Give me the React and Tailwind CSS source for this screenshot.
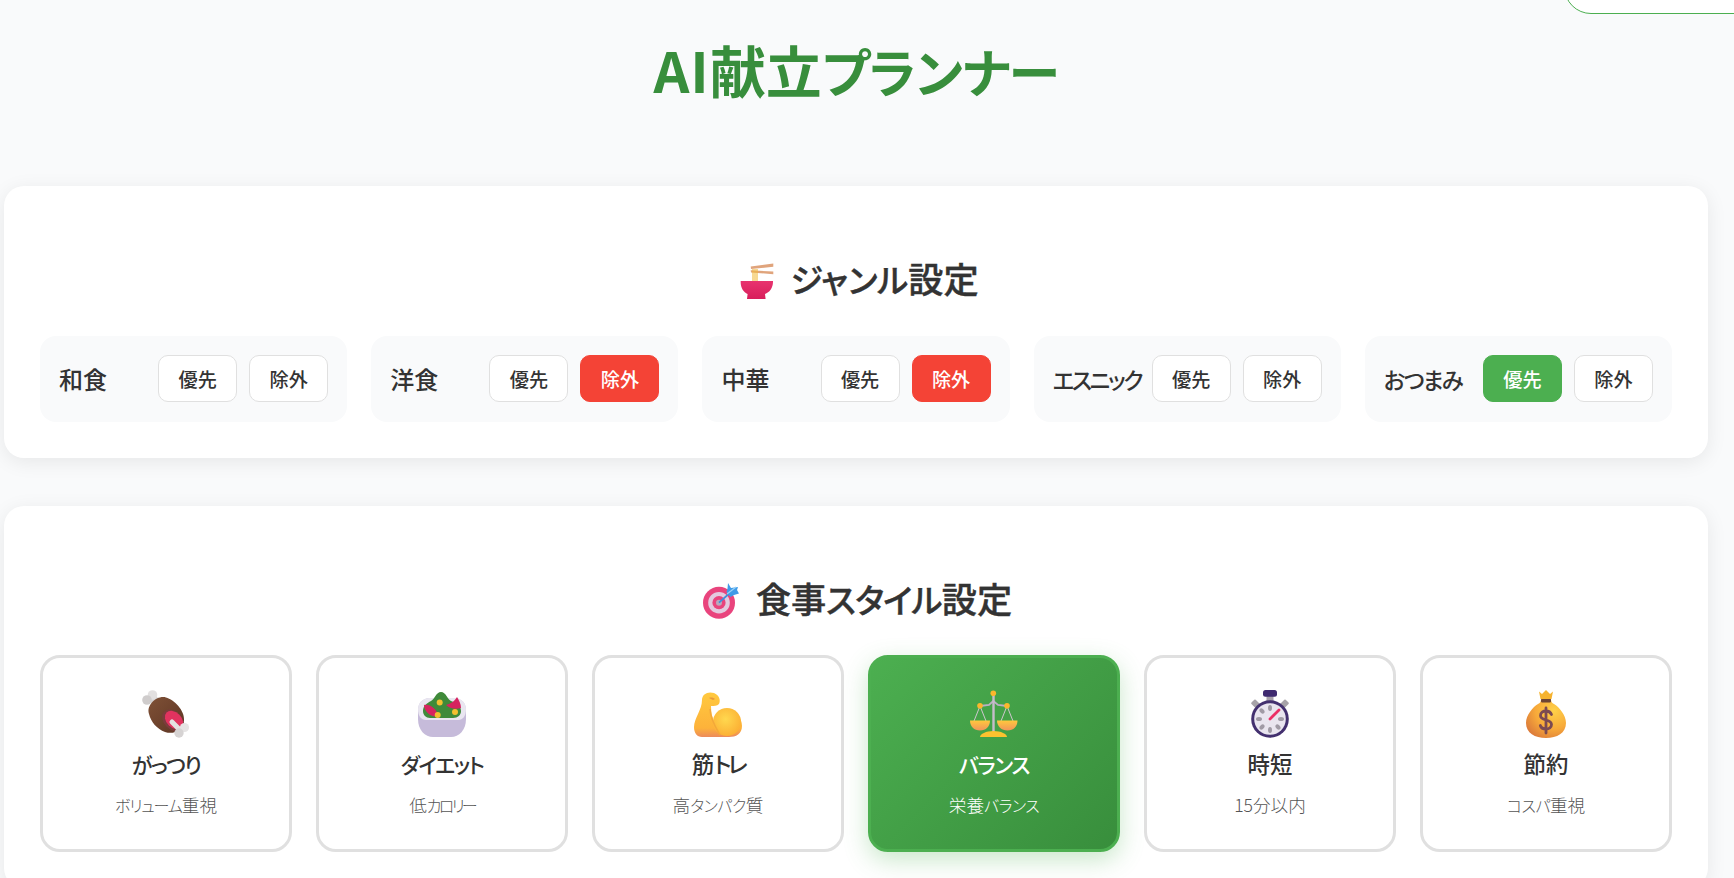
import React from "react";

const Bowl = () => (
  <svg viewBox="0 0 36 36" className="w-9 h-9 shrink-0">
    <defs>
      <linearGradient id="bowlG" x1="0" y1="0" x2="0" y2="1">
        <stop offset="0" stopColor="#e8336f" />
        <stop offset="1" stopColor="#d81e5b" />
      </linearGradient>
    </defs>
    <path d="M11.7 3.6 34.3.6v3.2L12 6Z" fill="#e0a47c" />
    <path d="M11.7 7.2 34.3 8.6v2.6L12 9.4Z" fill="#e0a47c" />
    <path d="M14 6v12M16 6v12M18 6v12" stroke="#f0b93a" strokeWidth="1.1" fill="none" />
    <path d="M1.7 18H34c.3 6.500-3.500 11.500-8 13l.6 5H8l.6-5C4.500 29.500 1.300 24.500 1.700 18Z" fill="url(#bowlG)" />
  </svg>
);

const Target = () => (
  <svg viewBox="0 0 36 36" className="w-9 h-9 shrink-0">
    <circle cx="16" cy="19.700" r="16" fill="#e9447d" />
    <circle cx="16" cy="19.700" r="10.800" fill="#e3cbdf" />
    <circle cx="16" cy="19.700" r="6.600" fill="#e9447d" />
    <circle cx="16" cy="19.700" r="3" fill="#b9a9bd" />
    <path d="M16 19.700 29 8" stroke="#3f8fdc" strokeWidth="1.800" />
    <path d="M25 0l3 5 7-1-1 3 2 3.500-5 1.500-3.500 2-4-5 1-3.500z" fill="#3f9be8" />
    <path d="M24 11 33 4" stroke="#9ad2f7" strokeWidth="1.200" />
  </svg>
);

const Meat = () => (
  <svg viewBox="0 0 48 48" className="w-12 h-12">
    <defs>
      <linearGradient id="meatG" x1="0" y1="0" x2="1" y2="1">
        <stop offset="0" stopColor="#7f5136" />
        <stop offset="1" stopColor="#5d3524" />
      </linearGradient>
    </defs>
    <path d="M9 13 15 7" stroke="#d5d2d2" strokeWidth="5" />
    <circle cx="10.500" cy="5" r="4.800" fill="#e2e0e0" />
    <circle cx="5" cy="10" r="4.800" fill="#cfcccc" />
    <path d="M7 24C4 15 15 5 24 7.500c8 2 19 13 18 23C41 40 32 45 23 42 15 39 9 32 7 24Z" fill="url(#meatG)" />
    <ellipse cx="31" cy="30.500" rx="9" ry="12.500" transform="rotate(-45 31 30.500)" fill="#7a3c3c" />
    <ellipse cx="32" cy="30" rx="7.500" ry="10.500" transform="rotate(-45 32 30)" fill="#e2335f" />
    <path d="M30 32 39 41" stroke="#e4e2e2" strokeWidth="5" strokeLinecap="round" />
    <circle cx="42.500" cy="37.500" r="4.600" fill="#e6e4e4" />
    <circle cx="37" cy="43" r="4.700" fill="#d6d3d3" />
  </svg>
);

const Salad = () => (
  <svg viewBox="0 0 48 48" className="w-12 h-12">
    <path d="M0 20C0 13 5 8 12 8h24c7 0 12 5 12 12v9c0 11-7 18-15 18H15C7 47 0 40 0 29Z" fill="#c6bbda" />
    <path d="M0 19c0-6 5-11 11-11h26c6 0 11 5 11 11 0 7-3 11-8 11H8c-5 0-8-4-8-11Z" fill="#e9e6f0" />
    <path d="M5 21c0-5 4-8 8-10 4-2 5-9 10-9s6 7 10 9c5 2 10 4 10 10 0 4-3 7-8 7H12c-4 0-7-3-7-7Z" fill="#3f8a3a" />
    <path d="M6 15c6-1 13 4 14 11-6 2-14-4-14-11Z" fill="#d6235f" />
    <path d="M43 18c-6 2-12 0-15-3 4-1 8-3 11-8 2 3 4 7 4 11Z" fill="#d6235f" />
    <circle cx="21.700" cy="12.500" r="3" fill="#f3c02f" />
    <circle cx="37" cy="22" r="3" fill="#f3c02f" />
    <circle cx="19.700" cy="25" r="3" fill="#f3c02f" />
  </svg>
);

const Arm = () => (
  <svg viewBox="0 0 48 48" className="w-12 h-12">
    <defs>
      <linearGradient id="armG" x1="0" y1="0" x2="0" y2="1">
        <stop offset="0" stopColor="#ffc93f" />
        <stop offset=".8" stopColor="#fdb23a" />
        <stop offset="1" stopColor="#ec8a5c" />
      </linearGradient>
      <radialGradient id="armB" cx=".45" cy=".4" r=".6">
        <stop offset="0" stopColor="#ffd84f" />
        <stop offset="1" stopColor="#fcb135" />
      </radialGradient>
    </defs>
    <path d="M8 10C8 4 14 1 20 3c5 2 7 7 5 11-2 2-5 2-8 2 0 6 1 12 4 17 2-8 7-12 13-12 8 0 14 7 14 15 0 8-6 11-13 11H8C3 47 0 43 0 37 0 28 8 20 8 10Z" fill="url(#armG)" />
    <circle cx="33" cy="32" r="14" fill="url(#armB)" />
    <path d="M15 8c2-1 5 0 6 1l-2 1Z" fill="#e8973a" />
    <path d="M16 19c0 8 4 16 10 26" stroke="#f3a83a" strokeWidth="1.500" fill="none" />
  </svg>
);

const Scales = () => (
  <svg viewBox="0 0 48 48" className="w-12 h-12">
    <defs>
      <linearGradient id="panG" x1="0" y1="0" x2="0" y2="1">
        <stop offset="0" stopColor="#ffc83d" />
        <stop offset="1" stopColor="#f0955a" />
      </linearGradient>
    </defs>
    <path d="M10 16 4 31M10 16l6 15M37 16l-6 15M37 16l6 15" stroke="#cfc6cf" strokeWidth="1" fill="none" />
    <path d="M10 16 19 15 23.300 11 28 15 37 16" stroke="#bcb0c4" strokeWidth="1.800" fill="none" />
    <rect x="22.300" y="4" width="2.400" height="40" fill="#c6bccb" />
    <circle cx="23.300" cy="3.200" r="2.800" fill="#fbb72c" />
    <circle cx="10" cy="15.700" r="2.800" fill="#fbb72c" />
    <circle cx="37" cy="15.700" r="2.800" fill="#fbb72c" />
    <path d="M0 30.500h20c0 6-4 10-10 10S0 36.500 0 30.500Z" fill="url(#panG)" />
    <path d="M27 30.500h20.500c0 6-4 10-10 10s-10.500-4-10.500-10Z" fill="url(#panG)" />
    <path d="M10 47c0-3 6-6 13.500-6S37 44 37 47Z" fill="#fcc22f" />
  </svg>
);

const Watch = () => (
  <svg viewBox="0 0 48 48" className="w-12 h-12">
    <rect x="20.500" y="5" width="7" height="6" fill="#a7a0ab" />
    <g transform="rotate(45 9.700 14)"><rect x="5.700" y="11" width="8" height="6" rx="1" fill="#a7a3a8" /></g>
    <g transform="rotate(-45 38.300 14)"><rect x="34.300" y="11" width="8" height="6" rx="1" fill="#a7a3a8" /></g>
    <rect x="17" y="0" width="14" height="6.700" rx="2.500" fill="#3f2a70" />
    <circle cx="24" cy="29" r="18.800" fill="#43306f" />
    <circle cx="24" cy="29" r="15.800" fill="#e9e5ef" />
    <g fill="#a09aa5">
      <ellipse cx="24" cy="18" rx="2" ry="3" />
      <ellipse cx="24" cy="40" rx="2" ry="3" />
      <ellipse cx="13" cy="29" rx="3" ry="2" />
      <ellipse cx="35" cy="29" rx="3" ry="2" />
      <ellipse cx="16" cy="21" rx="2" ry="3" transform="rotate(-45 16 21)" />
      <ellipse cx="16" cy="37" rx="2" ry="3" transform="rotate(45 16 37)" />
      <ellipse cx="32" cy="37" rx="2" ry="3" transform="rotate(-45 32 37)" />
    </g>
    <path d="M24 29 33 20" stroke="#ec2f66" strokeWidth="2.800" strokeLinecap="round" />
  </svg>
);

const Bag = () => (
  <svg viewBox="0 0 48 48" className="w-12 h-12">
    <defs>
      <radialGradient id="bagG" cx=".7" cy=".3" r=".85">
        <stop offset="0" stopColor="#ffd148" />
        <stop offset=".55" stopColor="#f7a93a" />
        <stop offset="1" stopColor="#d9763a" />
      </radialGradient>
    </defs>
    <path d="M17 1.500l3 2.500L24 0l4 4 3-2.500L29.500 9h-11Z" fill="#f6b32f" />
    <path d="M19 9h10c0 3 1 4 3 5 5 3 12 11 12 19 0 10-9 15-20 15S4 43 4 33c0-8 7-16 12-19 2-1 3-2 3-5Z" fill="url(#bagG)" />
    <rect x="19" y="9" width="10" height="3.400" rx=".8" fill="#6d4434" />
    <path d="M29.500 24.500c-1-2.500-3-3.500-5.500-3.500-3 0-5.500 1.500-5.500 4.500 0 6 11 3 11 9 0 3-2.500 4.500-5.500 4.500-2.700 0-5-1-5.700-3.500M24 18v25" stroke="#7b4a52" strokeWidth="2.800" fill="none" strokeLinecap="round" />
  </svg>
);

const genres = [
  { name: "和食" },
  { name: "洋食", state: "ex" },
  { name: "中華", state: "ex" },
  { name: "エスニック", track: "text-[22.4px] tracking-[-2.300px]" },
  { name: "おつまみ", state: "pr", track: "text-[22.4px] tracking-[-1.700px]" },
];

const styles = [
  {
    icon: <Meat />,
    title: <span className="text-[21px] leading-none tracking-[-1.500px]">がっつり</span>,
    sub: <><span className="text-[16px] leading-none tracking-[-1.100px]">ボリューム</span>重視</>,
  },
  {
    icon: <Salad />,
    title: <span className="text-[21px] leading-none tracking-[-1.600px]">ダイエット</span>,
    sub: <>低<span className="text-[16px] leading-none tracking-[-2.800px]">カロリー</span></>,
  },
  {
    icon: <Arm />,
    title: <>筋<span className="tracking-[-3.500px]">トレ</span></>,
    sub: <>高<span className="text-[16px] leading-none tracking-[-0.500px]">タンパク</span>質</>,
  },
  {
    icon: <Scales />,
    title: <span className="text-[21px] leading-none tracking-[-1.200px]">バランス</span>,
    sub: <>栄養<span className="text-[16px] leading-none tracking-[-0.500px]">バランス</span></>,
    active: true,
  },
  { icon: <Watch />, title: "時短", sub: "15分以内" },
  {
    icon: <Bag />,
    title: "節約",
    sub: <><span className="text-[16px] leading-none tracking-[-0.500px]">コスパ</span>重視</>,
  },
];

function GenreButton({ label, variant }) {
  const tone =
    variant === "pr"
      ? "bg-[#4caf50] border-[#4caf50] text-white"
      : variant === "ex"
        ? "bg-[#f44336] border-[#f44336] text-white"
        : "bg-white border-[#e0e0e0] text-[#333333]";
  return (
    <button className={`h-[47px] w-[79px] shrink-0 rounded-[10px] border pt-[2px] text-[19.2px] font-medium leading-[26px] ${tone}`}>
      {label}
    </button>
  );
}

export default function App() {
  return (
    <div className="relative h-[878px] w-[1734px] overflow-hidden bg-[#f9fafb] text-[#333333] [font-family:'Noto_Sans_CJK_JP','Noto_Sans',sans-serif] [font-feature-settings:'palt']">
      <div className="absolute right-[-40px] top-[-40px] h-[54px] w-[210px] rounded-[28px] border border-[#4caf50] bg-white" />
      <div className="ml-[4px] w-[1704px]">
        <h1 className="flex h-[186px] justify-center pt-[27px] text-[56px] font-bold leading-[84px] text-[#388e3c]">
          <span>
            <span className="tracking-[1px]">AI</span>献立<span className="text-[52px] leading-none tracking-[-1px]">プランナー</span>
          </span>
        </h1>

        <section className="mb-[48px] rounded-[20px] bg-white px-[36px] pb-[36px] pt-[68px] shadow-[0_4px_20px_rgba(0,0,0,0.08)]">
          <h2 className="mb-[28px] flex h-[54px] items-center justify-center gap-[15px] pl-[6px] text-[35.2px] font-medium leading-[54px] [-webkit-text-stroke:0.4px_#333333]">
            <Bowl />
            <span className="pb-[6px]">
              <span className="text-[33px] leading-none">ジャンル</span>設定
            </span>
          </h2>
          <div className="grid grid-cols-5 gap-6">
            {genres.map((g) => (
              <div key={g.name} className="flex h-[86px] items-center justify-between rounded-[16px] bg-[#f9fafb] px-[19px] pb-[2px]">
                <span className={`whitespace-nowrap pt-[2px] font-medium leading-[36px] ${g.track || "text-[24px]"}`}>{g.name}</span>
                <div className="flex gap-3">
                  <GenreButton label="優先" variant={g.state === "pr" ? "pr" : undefined} />
                  <GenreButton label="除外" variant={g.state === "ex" ? "ex" : undefined} />
                </div>
              </div>
            ))}
          </div>
        </section>

        <section className="rounded-[20px] bg-white px-[36px] pb-[36px] pt-[68px] shadow-[0_4px_20px_rgba(0,0,0,0.08)]">
          <h2 className="mb-[27px] flex h-[54px] items-center justify-center gap-[17px] pl-[3px] text-[35.2px] font-medium leading-[54px] [-webkit-text-stroke:0.4px_#333333]">
            <Target />
            <span className="pb-[6px]">
              食事<span className="text-[33px] leading-none tracking-[-0.750px]">スタイル</span>設定
            </span>
          </h2>
          <div className="grid grid-cols-6 gap-6">
            {styles.map((s, i) => (
              <div
                key={i}
                className={`flex h-[197px] flex-col items-center rounded-[20px] border-[3px] pt-[32px] ${
                  s.active
                    ? "border-[#4caf50] bg-[linear-gradient(135deg,#4caf50,#388e3c)] text-white shadow-[0_8px_25px_rgba(76,175,80,0.3)]"
                    : "border-[#e0e0e0] bg-white"
                }`}
              >
                {s.icon}
                <div className="mt-[9px] text-[22.4px] font-medium leading-[32px]">{s.title}</div>
                <div className={`mt-[13px] text-[17.6px] font-light leading-[26px] ${s.active ? "text-white" : "text-[#555555]"}`}>
                  {s.sub}
                </div>
              </div>
            ))}
          </div>
        </section>
      </div>
    </div>
  );
}
